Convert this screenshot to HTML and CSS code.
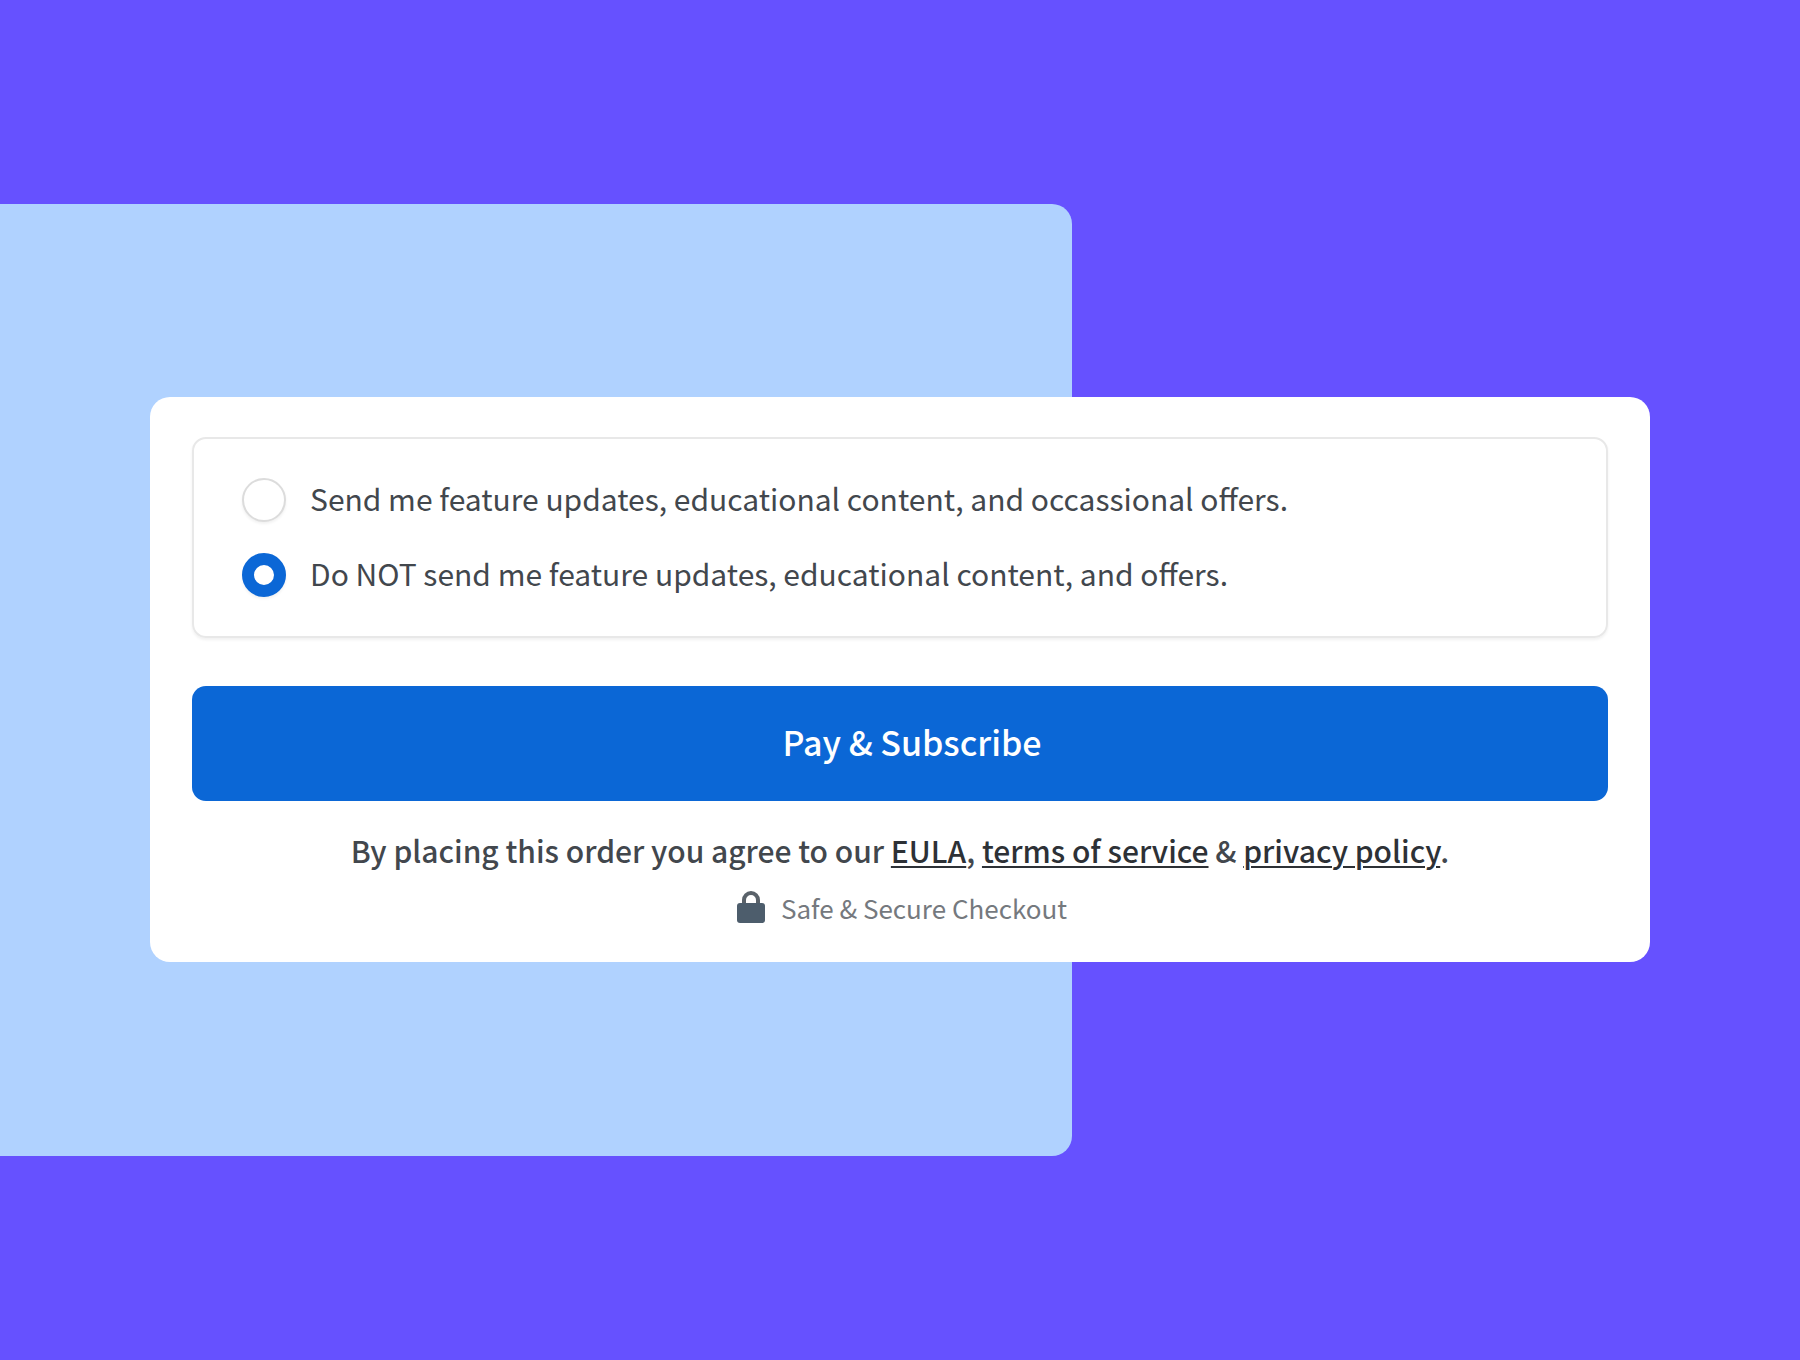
FILE: index.html
```html
<!DOCTYPE html>
<html lang="en-us">
	<head>
		<meta charset="utf-8">
		<title>Checkout</title>
		<link rel="stylesheet" href="styles.css">
	</head>
	<body>
		<main class="stage">
			<div class="backdrop"></div>
			<form class="card">
				<div class="options">
					<label class="option" for="optIn">
						<input type="radio" id="optIn" name="updates" value="yes">
						<span>Send me feature updates, educational content, and occassional offers.</span>
					</label>
					<label class="option" for="optOut">
						<input type="radio" id="optOut" name="updates" value="no" checked>
						<span>Do NOT send me feature updates, educational content, and offers.</span>
					</label>
				</div>
				<button type="submit" class="pay">Pay &amp; Subscribe</button>
				<p class="legal">By placing this order you agree to our <a href="#eula">EULA</a>, <a href="#terms">terms of service</a> &amp; <a href="#privacy">privacy policy</a>.</p>
				<p class="secure">
					<svg class="lock" viewBox="0 0 28 34" aria-hidden="true">
						<path d="M7 15V9a7 7 0 0 1 14 0V15" fill="none" stroke="#5a626a" stroke-width="4"/>
						<rect x="0" y="12" width="28" height="20" rx="3" fill="#4d5d6c"/>
					</svg>
					<span>Safe &amp; Secure Checkout</span>
				</p>
			</form>
		</main>
	</body>
</html>
```
FILE: styles.css
```css
* { box-sizing: border-box; }

body {
	margin: 0;
	background: #6651ff;
	color: #42474d;
	font: 30px/44px "Noto Sans CJK SC", "Open Sans", sans-serif;
}

.stage {
	display: grid;
	min-height: 100vh;
	align-items: center;
}

/* both layers share one grid cell */
.backdrop, .card { grid-area: 1 / 1; }

.backdrop {
	width: calc(60% - 8px);
	height: 70vh;
	background: #b0d2ff;
	border-radius: 0 20px 20px 0;
}

.card {
	margin: 0 150px 2px;
	padding: 40px 42px 32px;
	background: #fff;
	border-radius: 20px;
}

.options {
	display: grid;
	gap: 31px;
	padding: 39px 48px;
	border: 2px solid #e8e8e8;
	border-radius: 14px;
	box-shadow: 0 2px 3px rgba(0, 0, 0, .06);
}

.option {
	display: flex;
	align-items: center;
	gap: 24px;
}
.option span {
	padding-bottom: 4px;
	line-height: 40px;
}

.option input {
	appearance: none;
	flex: none;
	width: 44px;
	height: 44px;
	margin: 0;
	border: 2px solid #dcdcdc;
	border-radius: 50%;
	background: #fff;
	box-shadow: 0 2px 3px rgba(0, 0, 0, .06);
}
.option input:checked { border: 12px solid #0b67d6; }

.pay {
	display: block;
	width: 100%;
	margin: 48px 0 0;
	padding: 28px 0 32px 24px;
	border: 0;
	border-radius: 14px;
	background: #0b67d6;
	color: #fff;
	font: 500 34px/55px "Noto Sans CJK SC", "Open Sans", sans-serif;
}

.legal {
	margin: 27px 0 0;
	font-weight: 500;
	text-align: center;
}
.legal a {
	color: #2d3136;
	text-decoration-thickness: 2px;
	text-underline-offset: 3px;
}

.secure {
	display: flex;
	justify-content: center;
	align-items: center;
	gap: 16px;
	margin: 14px 0 0;
	padding-left: 4px;
	color: #75797e;
	font-size: 26px;
}
.lock { width: 28px; height: 34px; }
```
